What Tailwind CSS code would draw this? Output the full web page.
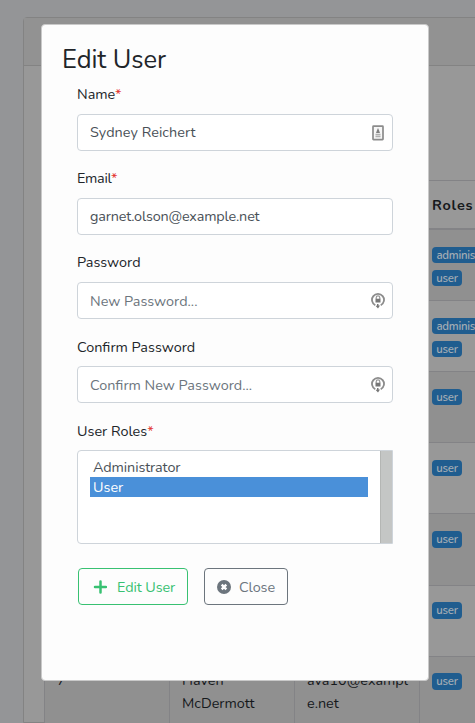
<!DOCTYPE html>
<html lang="en">
<head>
<meta charset="utf-8">
<title>Edit User</title>
<script src="https://cdn.jsdelivr.net/npm/@tailwindcss/browser@4"></script>
</head>
<body class="relative h-[723px] w-[475px] overflow-hidden bg-[#949597] font-[Nunito,Lato,sans-serif] text-[14.4px] leading-[23px] text-[#16191c]">
<!-- Users card behind the dialog -->
<main class="h-[723px] overflow-hidden pt-[17px] pl-[23px]">
  <div class="h-[706px] w-[560px] rounded-tl-[4px] border border-[#838383] bg-[#989898]">
    <div class="h-[48px] border-b border-[#838383] bg-[#929292]"></div>
    <div class="pt-[114px] pl-[20px]">
      <div class="w-[530px] border-t border-l border-[#838386]">
        <div class="grid h-[49px] grid-cols-[125px_125px_125px_1fr] border-b-2 border-[#838386] font-bold">
          <div class="border-r border-[#838386]"></div><div class="border-r border-[#838386]"></div><div class="border-r border-[#838386]"></div>
          <div class="pt-[13px] pl-[12px] tracking-[0.8px]">Roles</div>
        </div>
        <div class="flex h-[71px] flex-col items-start gap-[7px] border-b border-[#838386] bg-[#909090] pt-[17px] pl-[387px] text-[11.4px] font-semibold leading-[16px] tracking-[-0.25px] text-[#a3acb4]">
          <span class="rounded-[4px] bg-[#205d8f] px-[4.500px]">administrator</span><span class="w-[30px] rounded-[4px] bg-[#205d8f] text-center">user</span>
        </div>
        <div class="flex h-[71px] flex-col items-start gap-[7px] border-b border-[#838386] pt-[17px] pl-[387px] text-[11.4px] font-semibold leading-[16px] tracking-[-0.25px] text-[#a3acb4]">
          <span class="rounded-[4px] bg-[#205d8f] px-[4.500px]">administrator</span><span class="w-[30px] rounded-[4px] bg-[#205d8f] text-center">user</span>
        </div>
        <div class="flex h-[71px] items-start border-b border-[#838386] bg-[#909090] pt-[17px] pl-[387px] text-[11.4px] font-semibold leading-[16px] tracking-[-0.25px] text-[#a3acb4]"><span class="w-[30px] rounded-[4px] bg-[#205d8f] text-center">user</span></div>
        <div class="flex h-[71px] items-start border-b border-[#838386] pt-[17px] pl-[387px] text-[11.4px] font-semibold leading-[16px] tracking-[-0.25px] text-[#a3acb4]"><span class="w-[30px] rounded-[4px] bg-[#205d8f] text-center">user</span></div>
        <div class="flex h-[72px] items-start border-b border-[#838386] bg-[#909090] pt-[17px] pl-[387px] text-[11.4px] font-semibold leading-[17px] tracking-[-0.25px] text-[#a3acb4]"><span class="w-[30px] rounded-[4px] bg-[#205d8f] text-center">user</span></div>
        <div class="flex h-[71px] items-start border-b border-[#838386] pt-[16px] pl-[387px] text-[11.4px] font-semibold leading-[17px] tracking-[-0.25px] text-[#a3acb4]"><span class="w-[30px] rounded-[4px] bg-[#205d8f] text-center">user</span></div>
        <div class="grid h-[72px] grid-cols-[125px_125px_125px_1fr] border-b border-[#838386] bg-[#909090]">
          <div class="border-r border-[#838386] pt-[12px] pl-[12px]">7</div>
          <div class="border-r border-[#838386] pt-[12px] pl-[12px]">Haven<br>McDermott</div>
          <div class="border-r border-[#838386] pt-[12px] pl-[12px]">ava10@exampl<br>e.net</div>
          <div class="pt-[16px] pl-[12px] text-[11.4px] font-semibold leading-[17px] tracking-[-0.25px] text-[#a3acb4]"><span class="block w-[30px] rounded-[4px] bg-[#205d8f] text-center">user</span></div>
        </div>
      </div>
    </div>
  </div>
</main>

<!-- Dialog -->
<section class="absolute top-[24px] left-[41px] h-[657px] w-[388px] rounded-[4px] border border-[#c9c9c9] bg-[#fdfdfd] text-[#212529]">
  <h4 class="pt-[19px] pl-[20px] text-[25.5px] leading-[31px] tracking-[-0.06px]">Edit User</h4>
  <form class="flex w-[351px] flex-col pt-[8px] pl-[35px]">
    <label class="h-[31px]">Name<span class="text-[#e3342f]">*</span></label>
    <div class="mb-[16px] flex h-[37px] items-center justify-between rounded-[4px] border border-[#ced4da] bg-white pr-[8px] pl-[12px] text-[#495057]">
      <span class="tracking-[0.06px]">Sydney Reichert</span>
      <svg class="h-[16px] w-[12px]" viewBox="0 0 12 16"><rect x="1" y="1.200" width="10" height="13.400" rx=".5" fill="#f7f7f7" stroke="#8c8c8c" stroke-width="1.700"/><path d="M6 3 7 5.200 8 8H4l1-2.800z" fill="#808080"/><path d="M3.500 9.500h5M3.500 11.500h5" stroke="#b0b0b0" stroke-width="1.600"/></svg>
    </div>
    <label class="h-[31px] tracking-[-0.3px]">Email<span class="text-[#e3342f]">*</span></label>
    <div class="mb-[16px] flex h-[37px] items-center rounded-[4px] border border-[#ced4da] bg-white pl-[12px] text-[#495057]"><span class="tracking-[-0.17px]">garnet.olson@example.net</span></div>
    <label class="h-[31px]">Password</label>
    <div class="mb-[17px] flex h-[37px] items-center justify-between rounded-[4px] border border-[#ced4da] bg-white pr-[7px] pl-[12px] text-[#6c757d]">
      <span class="pt-px">New Password...</span>
      <svg class="h-[17px] w-[14px]" viewBox="0 0 14 17" fill="none"><path d="M4.300 13.200A6 6 0 1 1 9.700 13.200" stroke="#8c8c8c" stroke-width="1.800"/><path d="M5.200 7V5.700a1.800 1.800 0 0 1 3.600 0V7" stroke="#999" stroke-width="1.200"/><path d="M4.500 6.700h5v3.800h-5zM6 12h1.500v1.500H9L7 16.500 4.700 14 6 13.500z" fill="#777"/></svg>
    </div>
    <label class="h-[30px]">Confirm Password</label>
    <div class="mb-[17px] flex h-[37px] items-center justify-between rounded-[4px] border border-[#ced4da] bg-white pr-[7px] pl-[12px] text-[#6c757d]">
      <span class="pt-px">Confirm New Password...</span>
      <svg class="h-[17px] w-[14px]" viewBox="0 0 14 17" fill="none"><path d="M4.300 13.200A6 6 0 1 1 9.700 13.200" stroke="#8c8c8c" stroke-width="1.800"/><path d="M5.200 7V5.700a1.800 1.800 0 0 1 3.600 0V7" stroke="#999" stroke-width="1.200"/><path d="M4.500 6.700h5v3.800h-5zM6 12h1.500v1.500H9L7 16.500 4.700 14 6 13.500z" fill="#777"/></svg>
    </div>
    <label class="h-[30px]">User Roles<span class="text-[#e3342f]">*</span></label>
    <div class="mb-[24px] flex h-[94px] rounded-l-[4px] border border-[#ced4da] bg-white leading-[20px] text-[#495057]">
      <div class="flex-1 px-[12px] pt-[6px]">
        <div class="h-[20px] pl-[3px] tracking-[-0.1px]">Administrator</div>
        <div class="h-[20px] bg-[#4a90d9] pl-[3px] text-white">User</div>
      </div>
      <div class="w-[12px] border-l border-[#b4b6b4] bg-[#c4c6c5]"></div>
    </div>
    <div class="flex gap-[16px] pl-[1px]">
      <div class="flex h-[37px] w-[110px] items-center rounded-[4px] border border-[#38c172] pl-[14px] text-[#38c172]">
        <svg class="mr-[10px] h-[14px] w-[14px]" viewBox="0 0 14 14"><path d="M7.500 1.500v11M2 7h11" stroke="#38c172" stroke-width="2.500" stroke-linecap="round"/></svg>
        <span class="pt-px tracking-[-0.1px]">Edit User</span>
      </div>
      <div class="flex h-[37px] w-[84px] items-center rounded-[4px] border border-[#6c757d] pl-[12px] text-[#6c757d]">
        <svg class="mr-[8px] h-[14px] w-[14px]" viewBox="0 0 14 14"><circle cx="7" cy="7" r="7" fill="#6c757d"/><path d="m4.700 4.700 4.600 4.600M9.300 4.700 4.700 9.300" stroke="#fff" stroke-width="2.400"/></svg>
        <span class="pt-px tracking-[-0.1px]">Close</span>
      </div>
    </div>
  </form>
</section>
</body>
</html>
